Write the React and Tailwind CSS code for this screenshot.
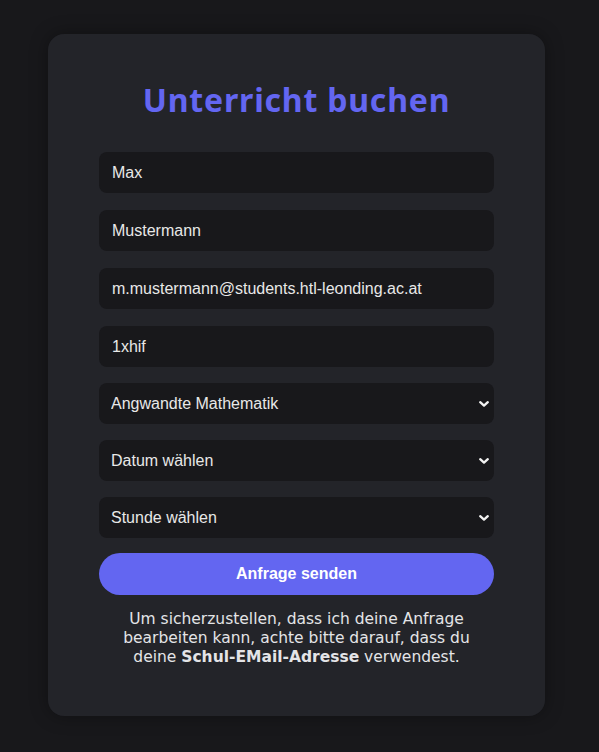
import React, {useState} from "react";

const fields = [
    {name: "firstname", value: "Max"},
    {name: "lastname", value: "Mustermann"},
    {name: "email", value: "m.mustermann@students.htl-leonding.ac.at"},
    {name: "klasse", value: "1xhif"},
];

const selects = [
    {name: "fach", value: "Angwandte Mathematik"},
    {name: "datum", value: "Datum wählen"},
    {name: "stunde", value: "Stunde wählen"},
];

const Chevron = () => (
    <svg className="pointer-events-none absolute right-[4px] top-1/2 -translate-y-1/2" width="12" height="10" viewBox="0 0 12 10">
        <path d="M2.2 3.2 L6 6.6 L9.8 3.2" fill="none" stroke="#f2f2f2" strokeWidth="2.3" strokeLinecap="round" strokeLinejoin="round"/>
    </svg>
);

const App = () => {
    const [form, setForm] = useState(() => Object.fromEntries(fields.map(f => [f.name, f.value])));

    return (
        <div className="min-h-[752px] bg-[#18181b] pl-[48px] pt-[34px] pb-[36px]">
            <div className="w-[497px] rounded-2xl bg-[#232429] px-[51px] pt-[44px] pb-[49px] shadow-[0_0_18px_rgba(0,0,0,0.35)]">
                <h1 className="text-center text-[32px] font-bold leading-[44px] text-[#6366f1] tracking-[0.8px]"
                    style={{fontFamily: '"Noto Sans", sans-serif'}}>
                    Unterricht buchen
                </h1>

                <form className="mt-[30px] flex flex-col" style={{fontFamily: '"Liberation Sans", Arial, sans-serif'}}>
                    <div className="flex flex-col gap-[17px]">
                        {fields.map(f => (
                            <input key={f.name}
                                   value={form[f.name]}
                                   onChange={e => setForm({...form, [f.name]: e.target.value})}
                                   className="h-[41px] w-full rounded-lg bg-[#18181b] px-[13px] text-base text-[#e8e8e8] outline-none"/>
                        ))}
                    </div>
                    <div className="mt-4 flex flex-col gap-4">
                        {selects.map(s => (
                            <div key={s.name} className="relative">
                                <select defaultValue={s.value}
                                        className="h-[41px] w-full appearance-none rounded-lg bg-[#18181b] px-[12px] text-base text-[#e8e8e8] outline-none">
                                    <option>{s.value}</option>
                                </select>
                                <Chevron/>
                            </div>
                        ))}
                    </div>
                    <button type="button"
                            className="mt-[15px] h-[42px] w-full rounded-full bg-[#6366f1] text-base font-bold text-white">
                        Anfrage senden
                    </button>
                </form>

                <p className="mt-[15px] px-[18px] text-center text-[15.5px] leading-[19px] text-[#e4e4e7]"
                   style={{fontFamily: '"DejaVu Sans", sans-serif'}}>
                    Um sicherzustellen, dass ich deine Anfrage bearbeiten kann, achte bitte darauf, dass du deine <b className="font-bold">Schul-EMail-Adresse</b> verwendest.
                </p>
            </div>
        </div>
    );
};

export default App;
